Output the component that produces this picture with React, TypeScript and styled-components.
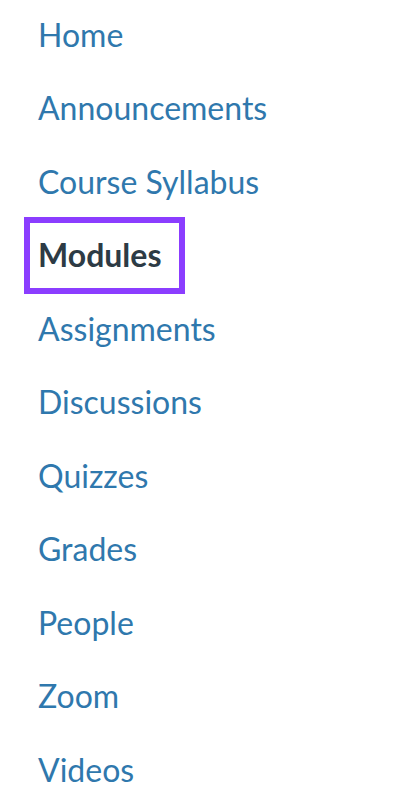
import React from 'react';
import styled, { createGlobalStyle } from 'styled-components';

const GlobalStyle = createGlobalStyle`
  html,
  body {
    margin: 0;
    padding: 0;
    background-color: #ffffff;
  }

  body {
    font-family: Lato, 'Liberation Sans', sans-serif;
  }
`;

const Nav = styled.nav`
  width: 414px;
  height: 808px;
  overflow: hidden;
`;

const NavList = styled.ul`
  display: flex;
  flex-direction: column;
  align-items: flex-start;
  gap: 35.1px;

  margin: 0;
  padding: 15.6px 0 0 38px;
  list-style: none;
`;

const NavItem = styled.li`
  display: flex;
`;

const NavLink = styled.a<{ $active?: boolean }>`
  position: relative;
  display: inline-block;

  font-size: 32px;
  line-height: 38.4px;
  font-weight: ${({ $active }) => ($active ? 700 : 400)};
  color: ${({ $active }) => ($active ? '#2d3b45' : '#2f78ad')};
  text-decoration: none;
  white-space: nowrap;

  /* focus ring around the current section */
  &::after {
    content: '';
    display: ${({ $active }) => ($active ? 'block' : 'none')};
    position: absolute;
    inset: -18.8px -24px -19px -14px;
    border: 6px solid #8b3dff;
    pointer-events: none;
  }
`;

const links = [
  'Home',
  'Announcements',
  'Course Syllabus',
  'Modules',
  'Assignments',
  'Discussions',
  'Quizzes',
  'Grades',
  'People',
  'Zoom',
  'Videos',
];

const App: React.FC = () => {
  return (
    <>
      <GlobalStyle />
      <Nav>
        <NavList>
          {links.map((label) => (
            <NavItem key={label}>
              <NavLink href="#" $active={label === 'Modules'}>
                {label}
              </NavLink>
            </NavItem>
          ))}
        </NavList>
      </Nav>
    </>
  );
};

export default App;
